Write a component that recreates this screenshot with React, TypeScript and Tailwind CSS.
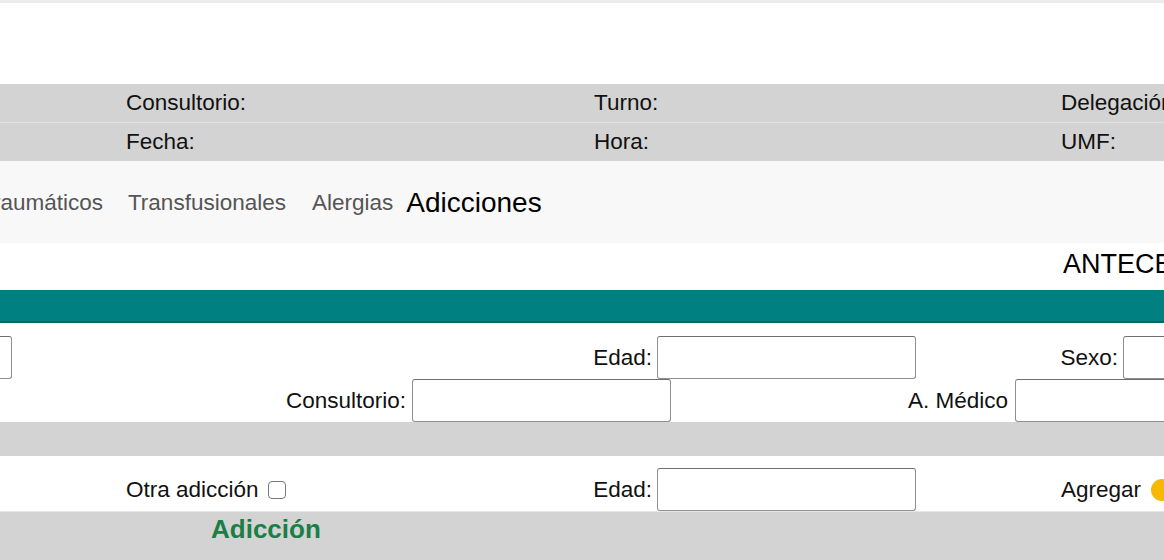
const font = "font-['Liberation_Sans',Arial,Helvetica,sans-serif]";

function Field({ className = '' }: { className?: string }) {
  return (
    <div
      className={`h-[43px] w-[259px] shrink-0 rounded-[3px] border border-[#8f8f8f] border-t-[#6f6f6f] bg-white ${className}`}
    />
  );
}

function Label({ text, width, pr }: { text: string; width: string; pr: string }) {
  return (
    <div className={`flex shrink-0 justify-end ${width} ${pr}`}>
      <span className="whitespace-nowrap">{text}</span>
    </div>
  );
}

export default function App() {
  return (
    <div className={`relative h-[559px] w-[1164px] overflow-hidden bg-white text-[22.5px] text-[#111] ${font}`}>
      {/* top edge */}
      <div className="h-[3px] bg-[#ebebeb]" />
      <div className="h-[81px]" />

      {/* datos generales */}
      <div className="bg-[#d3d3d3]">
        <div className="flex h-[38px] items-center whitespace-nowrap">
          <div className="w-[126px] shrink-0" />
          <div className="w-[468px] shrink-0">Consultorio:</div>
          <div className="w-[467px] shrink-0">Turno:</div>
          <div className="shrink-0">Delegación:</div>
        </div>
        <div className="h-[1px] bg-[#e3e3e3]" />
        <div className="flex h-[38px] items-center whitespace-nowrap">
          <div className="w-[126px] shrink-0" />
          <div className="w-[468px] shrink-0">Fecha:</div>
          <div className="w-[467px] shrink-0">Hora:</div>
          <div className="shrink-0">UMF:</div>
        </div>
      </div>

      {/* tabs */}
      <div className="flex h-[82px] items-center whitespace-nowrap bg-[#f8f8f8] pt-[2px]">
        <span className="-ml-[20px] shrink-0 text-[#555]">Traumáticos</span>
        <span className="ml-[25px] shrink-0 text-[#555]">Transfusionales</span>
        <span className="ml-[26px] shrink-0 text-[#555]">Alergias</span>
        <span className="ml-[13px] shrink-0 text-[28px] text-black">Adicciones</span>
      </div>

      {/* titulo */}
      <div className="flex h-[47px] items-start whitespace-nowrap pl-[1063px] pt-[4px]">
        <span className="text-[27px] leading-[34px] text-black">ANTECEDENTES</span>
      </div>

      {/* barra */}
      <div className="h-[33px] border-b-2 border-[#006767] bg-[#008080]" />

      {/* formulario paciente */}
      <div className="pt-[13px]">
        <div className="flex h-[43px] items-center whitespace-nowrap">
          <div className="h-[43px] w-[12px] shrink-0 rounded-r-[3px] border border-l-0 border-[#8f8f8f] border-t-[#6f6f6f] bg-white" />
          <Label text="Edad:" width="w-[645px]" pr="pr-[5px]" />
          <Field />
          <Label text="Sexo:" width="w-[207px]" pr="pr-[5px]" />
          <Field />
        </div>
        <div className="flex h-[43px] items-center whitespace-nowrap">
          <Label text="Consultorio:" width="w-[412px]" pr="pr-[6px]" />
          <Field />
          <Label text="A. Médico" width="w-[344px]" pr="pr-[7px]" />
          <Field />
        </div>
      </div>

      <div className="h-[34px] bg-[#d3d3d3]" />

      {/* captura adiccion */}
      <div className="flex h-[56px] items-start whitespace-nowrap border-b border-[#e6e6e6] pt-[12px]">
        <div className="w-[126px] shrink-0" />
        <div className="flex h-[43px] w-[531px] shrink-0 items-center justify-between pr-[5px]">
          <div className="flex items-center">
            <span>Otra adicción</span>
            <span className="ml-[9px] inline-block h-[18px] w-[18px] rounded-[4px] border-[1.5px] border-[#777] bg-white" />
          </div>
          <span>Edad:</span>
        </div>
        <Field />
        <div className="flex h-[43px] items-center">
          <span className="ml-[145px]">Agregar</span>
          <span className="ml-[10px] inline-block h-[22px] w-[40px] rounded-full bg-[#f6b800]" />
        </div>
      </div>

      {/* tabla */}
      <div className="h-[47px] bg-[#d3d3d3] pl-[211px] pt-[1px]">
        <span className="text-[26px] font-bold leading-[32px] text-[#1b7e47]">Adicción</span>
      </div>
    </div>
  );
}
